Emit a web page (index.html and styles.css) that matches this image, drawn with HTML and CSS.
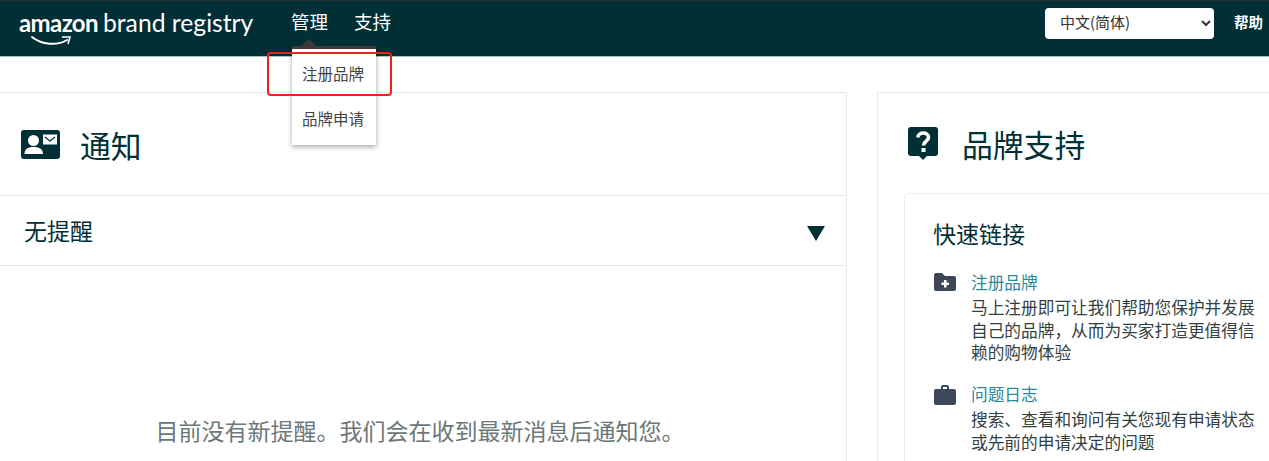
FILE: index.html
```html
<!DOCTYPE html>
<html lang="zh-CN">
<head>
    <meta charset="UTF-8">
    <meta name="viewport" content="width=device-width, initial-scale=1.0">
    <title>Amazon Brand Registry</title>
    <link rel="stylesheet" href="styles.css">
</head>
<body>
    <header class="topbar">
        <a class="logo" href="#">
            <span class="logo-amazon">amazon</span>
            <span class="logo-brand">brand registry</span>
            <svg class="logo-smile" viewBox="0 0 42 12" width="42" height="12">
                <path d="M1 2 C11 10 26 11 36 5" fill="none" stroke="#fff" stroke-width="2" stroke-linecap="round"/>
                <path d="M31 2 L39 2 L37 9" fill="none" stroke="#fff" stroke-width="1.6"/>
            </svg>
        </a>
        <nav class="nav">
            <div class="nav-item">
                <a href="#">管理</a>
                <span class="caret"></span>
                <ul class="menu">
                    <li>注册品牌</li>
                    <li>品牌申请</li>
                </ul>
                <span class="highlight"></span>
            </div>
            <div class="nav-item"><a href="#">支持</a></div>
        </nav>
        <select class="lang">
            <option>中文(简体)</option>
            <option>English</option>
        </select>
        <a class="help" href="#">帮助</a>
    </header>

    <main class="page">
        <section class="card notices">
            <div class="card-head">
                <svg class="icon-notice" viewBox="0 0 39 29" width="39" height="29">
                    <rect width="39" height="29" rx="3" fill="#002f36"/>
                    <circle cx="12.5" cy="10.5" r="5.5" fill="#fff"/>
                    <path d="M3.500 24 C3.500 18 8 17 12.500 17 C17 17 22 18 22 24 Z" fill="#fff"/>
                    <rect x="22" y="4.500" width="14" height="10" fill="#fff"/>
                    <path d="M24 7 L29 11 L34 7" fill="none" stroke="#002f36" stroke-width="1.300"/>
                </svg>
                <h1>通知</h1>
            </div>
            <div class="alert-row">
                <span>无提醒</span>
                <span class="triangle"></span>
            </div>
            <p class="empty">目前没有新提醒。我们会在收到最新消息后通知您。</p>
        </section>

        <section class="card support">
            <div class="card-head support-head">
                <svg class="icon-help" viewBox="0 0 30 33" width="30" height="33">
                    <path d="M3 0 H27 A3 3 0 0 1 30 3 V26 A3 3 0 0 1 27 29 H19 L15 33 L11 29 H3 A3 3 0 0 1 0 26 V3 A3 3 0 0 1 3 0 Z" fill="#002f36"/>
                    <path d="M10 10.500 C10 4.500 20.500 4.500 20.500 10.500 C20.500 14.500 15.500 14 15.500 18.500" fill="none" stroke="#fff" stroke-width="3.600"/>
                    <rect x="13.500" y="21" width="4" height="4" fill="#fff"/>
                </svg>
                <h1>品牌支持</h1>
            </div>
            <div class="links">
                <h2>快速链接</h2>
                <div class="link-item">
                    <svg viewBox="0 0 22 18" width="22" height="18">
                        <path d="M2 0 H8 L11 3 H20 A2 2 0 0 1 22 5 V16 A2 2 0 0 1 20 18 H2 A2 2 0 0 1 0 16 V2 A2 2 0 0 1 2 0 Z" fill="#3d4759"/>
                        <path d="M10 7 H12.500 V9.500 H15 V12 H12.500 V14.500 H10 V12 H7.500 V9.500 H10 Z" fill="#fff"/>
                    </svg>
                    <div>
                        <a href="#">注册品牌</a>
                        <p>马上注册即可让我们帮助您保护并发展自己的品牌，从而为买家打造更值得信赖的购物体验</p>
                    </div>
                </div>
                <div class="link-item">
                    <svg viewBox="0 0 22 20" width="22" height="20">
                        <path d="M7 4 V2 A2 2 0 0 1 9 0 H13 A2 2 0 0 1 15 2 V4 H13 V2 H9 V4 Z" fill="#3d4759"/>
                        <rect y="4" width="22" height="16" rx="2" fill="#3d4759"/>
                    </svg>
                    <div>
                        <a href="#">问题日志</a>
                        <p>搜索、查看和询问有关您现有申请状态或先前的申请决定的问题</p>
                    </div>
                </div>
            </div>
        </section>
    </main>
</body>
</html>
```

FILE: styles.css
```css
* { box-sizing: border-box; }
html, body { height: 461px; overflow: hidden; }
body { margin: 0; background: #fff; color: #002f36; font-family: "Noto Sans CJK SC", "Noto Sans", sans-serif; }
a { text-decoration: none; }

.topbar { display: flex; align-items: center; height: 57px; padding: 0 5px 11px 19px; background: #002f36; border-top: 1px solid #2b2b2b; border-bottom: 1px solid #a9c0c4; color: #fff; }
.logo { position: relative; display: flex; align-items: baseline; gap: 5px; width: 272px; margin-top: -1px; color: #fff; font-family: Lato, sans-serif; }
.logo-amazon { font-size: 24px; font-weight: 700; letter-spacing: -0.6px; }
.logo-brand { font-size: 24.700px; font-weight: 400; }
.logo-smile { position: absolute; left: 12px; top: 27px; }

.nav { display: flex; gap: 26px; margin-top: -5px; }
.nav-item { position: relative; }
.nav-item a { color: #fff; font-size: 18.500px; line-height: 26px; }
.caret { position: absolute; left: 9px; top: 31px; border: 9px solid transparent; border-top: 0; border-bottom: 8px solid #3b3b3b; }
.menu { position: absolute; z-index: 2; left: 1px; top: 38px; width: 84px; height: 99px; margin: 0; padding: 2px 2px 0 0; list-style: none; background: #fff; border-top: 3px solid #3b3b3b; box-shadow: 0 2px 5px rgba(0, 0, 0, 0.35); color: #444; font-size: 15.500px; text-align: center; }
.menu li { height: 45px; line-height: 45px; }
.highlight { position: absolute; z-index: 3; left: -24px; top: 44px; width: 125px; height: 44px; border: 2.500px solid #f0201c; border-radius: 4px; }

.lang { width: 169px; height: 31px; margin-left: auto; padding: 0 0 3px 11px; background: #fff; border: 0; border-radius: 4px; color: #333; font-family: inherit; font-size: 15px; }
.help { width: 30px; margin: -3px 0 0 20px; color: #fff; font-size: 14.500px; font-weight: 700; white-space: nowrap; }

.page { display: flex; gap: 30px; padding-top: 35px; width: 1300px; }
.card { height: 500px; background: #fff; border: 1px solid #e7e7e7; }
.notices { width: 847px; border-left: 0; }
.support { width: 400px; padding-left: 26px; }
.card-head { display: flex; align-items: center; gap: 20px; height: 103px; padding-left: 21px; border-bottom: 1px solid #e7e7e7; }
.card-head h1 { margin: 0; font-size: 30.800px; font-weight: 400; }
.support-head { gap: 24px; height: 100px; padding-left: 4px; border: 0; }

.alert-row { display: flex; align-items: center; justify-content: space-between; height: 70px; padding: 0 21px 0 24px; border-bottom: 1px solid #e7e7e7; font-size: 23px; }
.alert-row span:first-child { margin-top: -2px; }
.triangle { margin-top: 5px; border: 9px solid transparent; border-bottom: 0; border-top: 15px solid #002f36; }
.empty { margin: 147px 6px 0 0; color: #6c7778; font-size: 23px; text-align: center; white-space: nowrap; }

.links { height: 400px; padding: 22px 0 0 28px; border: 1px solid #eee; border-radius: 4px 0 0 0; }
.links h2 { margin: 0 0 19px; font-size: 23px; font-weight: 400; line-height: 34px; }
.link-item { display: flex; gap: 15px; margin-bottom: 17px; padding-left: 1px; }
.link-item svg { flex: none; margin-top: 4px; }
.link-item a { display: block; color: #2a8a9a; font-size: 16.700px; line-height: 27px; }
.link-item p { width: 288px; margin: 0; color: #333f41; font-size: 16.700px; line-height: 22.700px; }
```
